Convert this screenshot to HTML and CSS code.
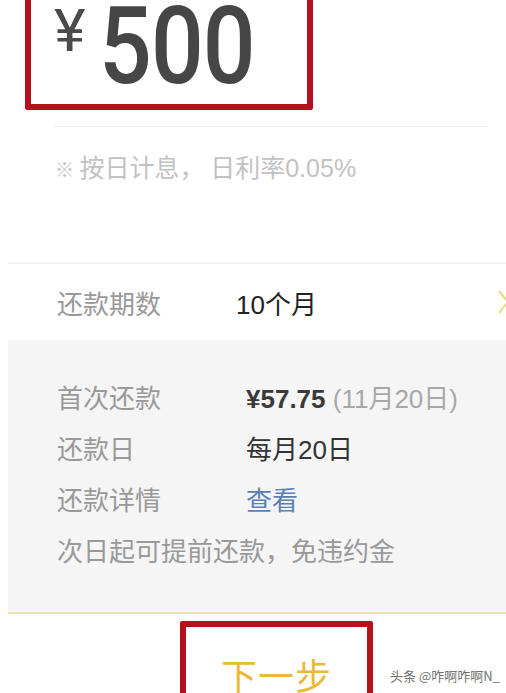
FILE: index.html
```html
<!DOCTYPE html>
<html lang="zh-CN">
<head>
<meta charset="utf-8">
<title>借款</title>
<link rel="stylesheet" href="styles.css">
</head>
<body>
<div class="page">
  <div class="amount-box">
    <span class="yen">¥</span>
    <span class="amount">500</span>
  </div>
  <div class="divider"></div>
  <p class="note"><span class="mark">※</span> 按日计息， 日利率<span class="num">0.05%</span></p>

  <div class="period-row">
    <span class="label">还款期数</span>
    <span class="value">10个月</span>
    <svg class="chevron" width="14" height="28" viewBox="0 0 14 28"><path d="M3 3 L12 14 L3 25" fill="none" stroke="#e3de84" stroke-width="2"/></svg>
  </div>

  <div class="details">
    <div class="drow"><span class="label">首次还款</span><span class="value"><b class="money">¥57.75</b> <span class="date">(11月20日)</span></span></div>
    <div class="drow"><span class="label">还款日</span><span class="value">每月20日</span></div>
    <div class="drow"><span class="label">还款详情</span><span class="value link">查看</span></div>
    <div class="drow"><span class="label">次日起可提前还款，免违约金</span></div>
  </div>

  <div class="next-wrap">
    <div class="next-box"><span class="next">下一步</span></div>
  </div>
  <div class="watermark">头条 @咋啊咋啊N_</div>
</div>
</body>
</html>
```
FILE: styles.css
```css
html, body {
  margin: 0;
  padding: 0;
  background: #ffffff;
}
body {
  font-family: "Liberation Sans", "Noto Sans CJK SC", sans-serif;
  width: 506px;
  height: 693px;
  overflow: hidden;
}
.page {
  position: relative;
  width: 506px;
  height: 693px;
}
.amount-box {
  margin-left: 25px;
  width: 288px;
  height: 110px;
  box-sizing: border-box;
  border: 6px solid #b3111b;
  border-top: 0;
  border-radius: 0 0 3px 3px;
  display: flex;
  align-items: flex-start;
  padding-left: 23px;
}
.yen {
  font-family: "Roboto", sans-serif;
  font-weight: 400;
  font-size: 60px;
  line-height: 60px;
  color: #4a4a4a;
  margin-top: 1px;
}
.amount {
  font-family: "Roboto", sans-serif;
  font-weight: 500;
  font-size: 108px;
  line-height: 92px;
  color: #464646;
  display: inline-block;
  transform: scaleX(0.86);
  transform-origin: left center;
  margin-left: 13px;
  letter-spacing: -1px;
}
.divider {
  margin: 16px 18px 0 53px;
  height: 1px;
  background: #eeeeee;
}
.note {
  margin: 25px 0 0 55px;
  font-family: "Noto Sans CJK SC", sans-serif;
  font-size: 25px;
  line-height: 28px;
  color: #c2c2c2;
}
.note .mark {
  font-size: 19px;
}
.note .num {
  font-family: "Liberation Sans", sans-serif;
}
.period-row {
  margin: 79px 0 0 8px;
  border-top: 2px solid #f2f2f2;
  height: 76px;
  display: flex;
  align-items: center;
  padding-left: 49px;
  position: relative;
}
.label {
  font-family: "Noto Sans CJK SC", sans-serif;
  font-size: 26px;
  color: #999999;
}
.period-row .label {
  width: 179px;
}
.period-row .value {
  font-family: "Liberation Sans", "Noto Sans CJK SC", sans-serif;
  font-size: 26px;
  color: #222222;
}
.chevron {
  position: absolute;
  right: -4px;
  top: 24px;
}
.details {
  margin-left: 8px;
  background: #f5f5f5;
  height: 274px;
  box-sizing: border-box;
  border-bottom: 2px solid #ece2b4;
  padding: 31px 0 0 49px;
  display: flex;
  flex-direction: column;
}
.drow {
  display: flex;
  align-items: center;
  height: 51px;
}
.drow .label {
  width: 189px;
  flex: none;
}
.drow:last-child .label {
  width: auto;
}
.drow .value {
  font-family: "Liberation Sans", "Noto Sans CJK SC", sans-serif;
  font-size: 26px;
  color: #333333;
}
.money {
  font-weight: 700;
  color: #3a3a3a;
}
.date {
  color: #a8a8a8;
}
.link {
  color: #5a7fb5 !important;
  font-family: "Noto Sans CJK SC", sans-serif !important;
}
.next-wrap {
  padding: 7px 0 0 180px;
}
.next-box {
  width: 193px;
  height: 80px;
  box-sizing: border-box;
  border: 6px solid #b3111b;
  border-bottom: 0;
  border-radius: 3px 3px 0 0;
  display: flex;
  justify-content: center;
  padding-top: 25px;
}
.next {
  font-family: "Noto Sans CJK SC", sans-serif;
  font-size: 36px;
  line-height: 44px;
  color: #e9b93a;
  letter-spacing: 1px;
}
.watermark {
  position: absolute;
  left: 388px;
  top: 666px;
  font-family: "Noto Sans CJK SC", sans-serif;
  font-size: 13px;
  line-height: 20px;
  color: #6f6f6f;
  background: rgba(255,255,255,0.9);
  padding: 0 4px 0 2px;
}
```
